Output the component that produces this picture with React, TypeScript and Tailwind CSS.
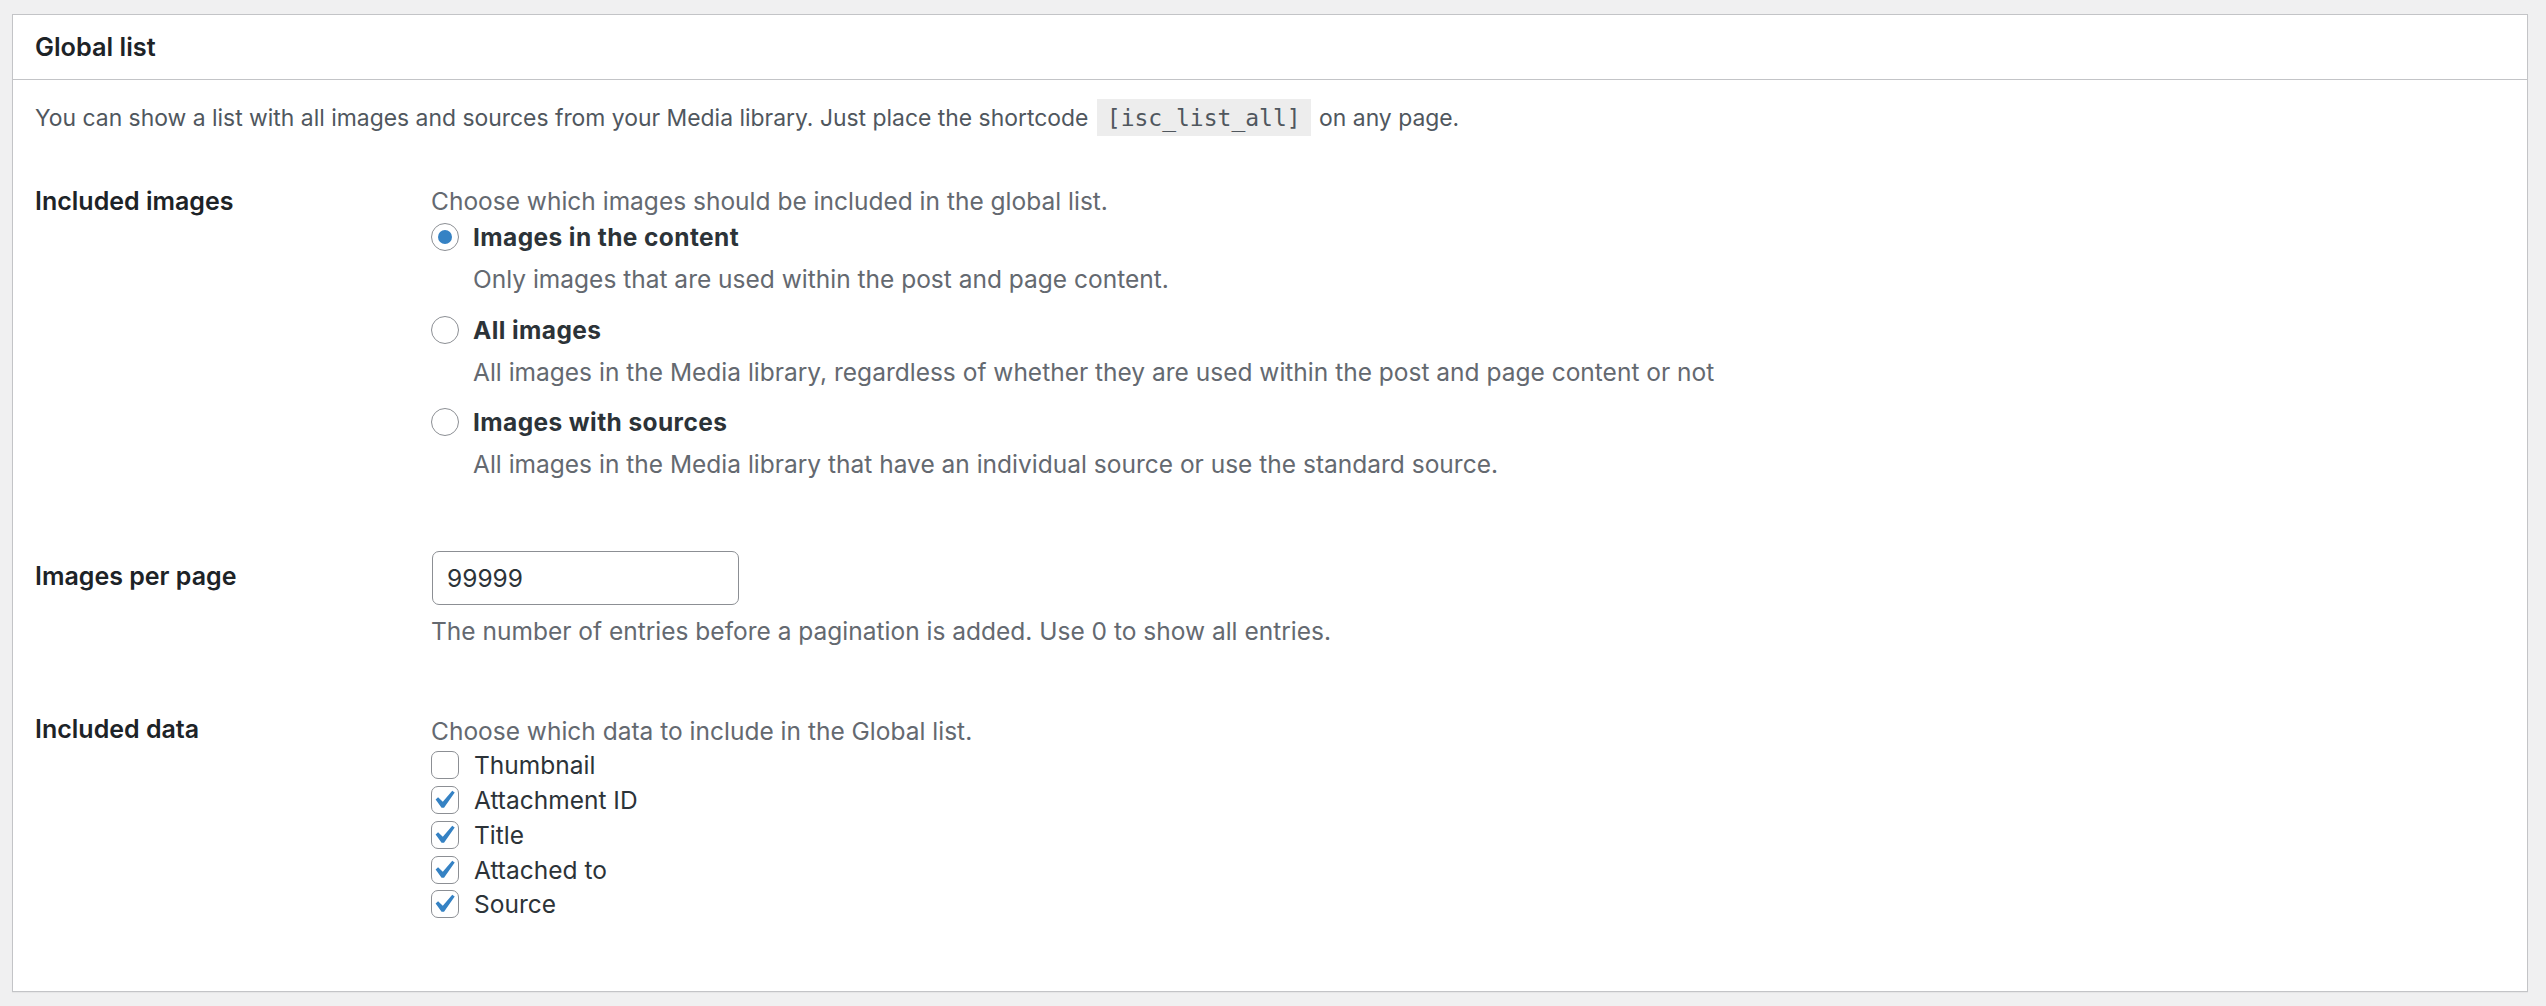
import React from "react";

const Check = () => (
  <svg viewBox="3.81 2.857 14.15 14.15" className="w-[26px] h-[26px] block">
    <path
      d="M14.83 4.89l1.34.94-5.81 8.38H9.02L5.78 9.67l1.34-1.25 2.57 2.4z"
      fill="#3582c4"
    />
  </svg>
);

function Radio({ checked }: { checked?: boolean }) {
  return (
    <span className="w-[28px] h-[28px] rounded-full border border-[#8c8f94] bg-white flex items-center justify-center shrink-0">
      {checked && <span className="w-[14px] h-[14px] rounded-full bg-[#3582c4]" />}
    </span>
  );
}

function Checkbox({ checked }: { checked?: boolean }) {
  return (
    <span className="w-[28px] h-[28px] rounded-[7px] border border-[#8c8f94] bg-white block shrink-0">
      {checked && <Check />}
    </span>
  );
}

const radios = [
  {
    label: "Images in the content",
    desc: "Only images that are used within the post and page content.",
    checked: true,
  },
  {
    label: "All images",
    desc: "All images in the Media library, regardless of whether they are used within the post and page content or not",
  },
  {
    label: "Images with sources",
    desc: "All images in the Media library that have an individual source or use the standard source.",
  },
];

const checks = [
  { label: "Thumbnail", checked: false },
  { label: "Attachment ID", checked: true },
  { label: "Title", checked: true },
  { label: "Attached to", checked: true },
  { label: "Source", checked: true },
];

export default function App() {
  return (
    <div className="min-h-screen bg-[#f0f0f1] pt-[14px] pl-[12px] pr-[18px] pb-[14px] font-['Inter',sans-serif] text-[24.5px] text-[#3c434a]">
      <div className="bg-white border border-[#c3c4c7] shadow-[0_1px_1px_rgba(0,0,0,0.04)] h-[978px]">
        <div className="h-[65px] border-b border-[#c3c4c7] flex items-center px-[22px]">
          <h2 className="text-[25.3px] font-semibold text-[#1d2327] leading-none">Global list</h2>
        </div>
        <div className="px-[22px]">
          <p className="mt-[21px] leading-[34px] text-[22.9px] text-[#50575e]">
            You can show a list with all images and sources from your Media library. Just place the shortcode{" "}
            <code className="font-['DejaVu_Sans_Mono',monospace] text-[23px] bg-[#ededed] text-[#50575e] px-[10px] pt-[6px] pb-[5px] mx-[2px]">
              [isc_list_all]
            </code>{" "}
            on any page.
          </p>

          {/* Included images */}
          <div className="flex mt-[49px]">
            <div className="w-[396px] shrink-0 leading-[34px] text-[25px] font-semibold text-[#1d2327]">Included images</div>
            <div className="flex flex-col">
              <p className="leading-[34px] text-[#646970]">Choose which images should be included in the global list.</p>
              {radios.map((r, i) => (
                <div key={r.label} className={i === 0 ? "mt-[2px]" : "mt-[16.5px]"}>
                  <label className="flex items-center h-[34px] gap-[14px]">
                    <Radio checked={r.checked} />
                    <strong className="font-bold tracking-[0.4px] text-[#2c3338] leading-[34px]">{r.label}</strong>
                  </label>
                  <p className="mt-[8px] ml-[42px] leading-[34px] text-[#646970]">{r.desc}</p>
                </div>
              ))}
            </div>
          </div>

          {/* Images per page */}
          <div className="flex mt-[70px]">
            <div className="w-[396px] shrink-0 pt-[8px] leading-[34px] text-[25px] font-semibold text-[#1d2327]">Images per page</div>
            <div className="flex flex-col">
              <div className="ml-[1px] w-[307px] h-[54px] border border-[#8c8f94] rounded-[7px] bg-white flex items-center px-[14px] text-[#2c3338]">
                99999
              </div>
              <p className="mt-[9px] leading-[34px] text-[#646970]">
                The number of entries before a pagination is added. Use 0 to show all entries.
              </p>
            </div>
          </div>

          {/* Included data */}
          <div className="flex mt-[64px]">
            <div className="w-[396px] shrink-0 leading-[34px] text-[25px] font-semibold text-[#1d2327]">Included data</div>
            <div className="flex flex-col">
              <p className="mt-[2px] leading-[34px] text-[#646970]">Choose which data to include in the Global list.</p>
              {checks.map((c) => (
                <label key={c.label} className="flex items-center h-[34.75px] gap-[15px] text-[#2c3338]">
                  <Checkbox checked={c.checked} />
                  <span className="leading-[34px]">{c.label}</span>
                </label>
              ))}
            </div>
          </div>
        </div>
      </div>
    </div>
  );
}
